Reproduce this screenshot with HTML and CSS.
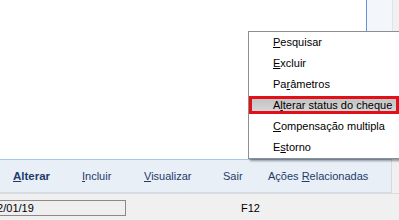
FILE: index.html
```html
<!DOCTYPE html>
<html>
<head>
<meta charset="utf-8">
<link rel="stylesheet" href="styles.css">
</head>
<body>
<div class="app">
  <div class="upper">
    <div class="canvas"></div>
    <div class="pane"></div>
    <div class="gutter"></div>
  </div>
  <div class="toolrow">
    <div class="toolbar">
      <span class="btn bold"><u>A</u>lterar</span>
      <span class="btn"><u>I</u>ncluir</span>
      <span class="btn"><u>V</u>isualizar</span>
      <span class="btn">Sair</span>
      <span class="btn">Ações <u>R</u>elacionadas</span>
    </div>
    <div class="gutter"></div>
  </div>
  <div class="status">
    <div class="field">02/01/19</div>
    <div class="key">F12</div>
  </div>

  <div class="menu">
    <div class="item"><u>P</u>esquisar</div>
    <div class="item"><u>E</u>xcluir</div>
    <div class="item">Pa<u>r</u>âmetros</div>
    <div class="item active">A<u>l</u>terar status do cheque</div>
    <div class="item"><u>C</u>ompensação multipla</div>
    <div class="item">E<u>s</u>torno</div>
  </div>
</div>
</body>
</html>
```
FILE: styles.css
```css
html, body {
  margin: 0;
  padding: 0;
}
body {
  width: 399px;
  height: 220px;
  overflow: hidden;
  font-family: "Liberation Sans", Arial, sans-serif;
  font-size: 11px;
  background: #ffffff;
}
.app {
  position: relative;
  width: 399px;
  height: 220px;
  display: flex;
  flex-direction: column;
}
.upper {
  height: 159px;
  display: flex;
}
.canvas {
  width: 366px;
  background: #ffffff;
}
.pane {
  width: 25px;
  border-left: 1px solid #5f97d8;
  border-right: 1px solid #dde4ec;
  background: #f3f6fa;
}
.gutter {
  flex: 1;
  background: #f0f0f0;
}
.toolrow {
  height: 34px;
  display: flex;
}
.toolbar {
  width: 392px;
  box-sizing: border-box;
  border-top: 1px solid #a7c6e8;
  border-bottom: 1px solid #d3dce6;
  border-right: 1px solid #d3dce6;
  background: #e9eff6;
  display: grid;
  grid-template-columns: 69px 62px 79px 45px auto;
  align-items: center;
  padding-left: 13px;
  color: #1d3c6b;
  font-size: 11px;
}
.bold {
  font-weight: bold;
  font-size: 11.5px;
}
.status {
  flex: 1;
  background: #f0f0f0;
  border-top: 1px solid #dcdcdc;
  display: grid;
  grid-template-columns: 126px auto;
  column-gap: 115px;
  align-items: center;
  color: #000;
  font-size: 11px;
}
.field {
  margin-left: -13px;
  height: 14px;
  line-height: 14px;
  border: 1px solid #8a8a8a;
  background: #efefef;
  padding-left: 3px;
  margin-top: 1px;
  white-space: nowrap;
  overflow: hidden;
}
.key {
  padding-top: 1px;
}
.menu {
  position: absolute;
  left: 248px;
  top: 31px;
  width: 160px;
  background: #ffffff;
  border: 1px solid #8e8e8e;
  box-shadow: 2px 2px 2px rgba(30, 40, 60, 0.45);
  color: #000;
  font-size: 11px;
}
.item {
  height: 21px;
  line-height: 20px;
  padding-left: 24px;
  white-space: nowrap;
}
.item.active {
  box-sizing: border-box;
  width: 150px;
  height: 18px;
  line-height: 12px;
  margin: 1px 0 2px 0;
  padding-left: 21px;
  border: 3px solid #e3101a;
  background: linear-gradient(#c3c3c3, #d6d6d6);
}
```
